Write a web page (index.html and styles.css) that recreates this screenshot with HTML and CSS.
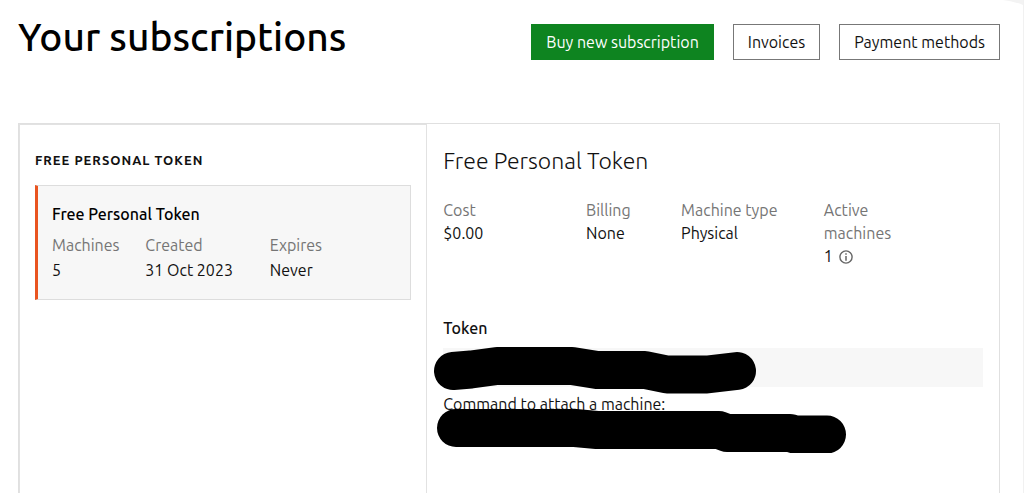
FILE: index.html
```html
<!DOCTYPE html>
<html lang="en">
<head>
<meta charset="utf-8">
<meta name="viewport" content="width=device-width, initial-scale=1">
<title>Your subscriptions</title>
<link rel="stylesheet" href="styles.css">
</head>
<body>
<svg class="corner" viewBox="0 0 20 5" aria-hidden="true"><path d="M0 0H20V5Q10 1 0 0Z" fill="#f3f3f3"/></svg>
<main class="page">
  <header class="header">
    <h1 class="title">Your subscriptions</h1>
    <div class="actions">
      <button class="button button-positive" type="button">Buy new subscription</button>
      <button class="button" type="button">Invoices</button>
      <button class="button" type="button">Payment methods</button>
    </div>
  </header>
  <div class="panel">
    <section class="list">
      <h2 class="list-title">Free Personal Token</h2>
      <article class="card">
        <h3 class="card-title">Free Personal Token</h3>
        <dl class="card-facts">
          <div class="three"><dt>Machines</dt><dd>5</dd></div>
          <div class="four"><dt>Created</dt><dd>31 Oct 2023</dd></div>
          <div class="four"><dt>Expires</dt><dd>Never</dd></div>
        </dl>
      </article>
    </section>
    <section class="details">
      <h2 class="details-title">Free Personal Token</h2>
      <dl class="facts">
        <div class="three"><dt>Cost</dt><dd>$0.00</dd></div>
        <div class="two"><dt>Billing</dt><dd>None</dd></div>
        <div class="three"><dt>Machine type</dt><dd>Physical</dd></div>
        <div class="two"><dt>Active machines</dt><dd class="active">1
          <svg class="info" viewBox="0 0 14 14" aria-hidden="true"><circle cx="7" cy="7" r="6.1" fill="none" stroke="#666" stroke-width="1.4"/><path d="M7 3.2V4.8M7 6V10.8" stroke="#666" stroke-width="1.5"/></svg></dd></div>
      </dl>
      <div class="token">
        <h3 class="token-title">Token</h3>
        <div class="token-value"></div>
        <p class="command">Command to attach a machine:</p>
        <svg class="marker" viewBox="0 0 420 110" aria-hidden="true">
          <g fill="none" stroke="#000" stroke-width="38" stroke-linecap="round" stroke-linejoin="round">
            <path d="M22 28L40 26.5L66 23H141L166 27H214L236 31.5H276L306 28"/>
            <path d="M25 85H144L166 87H288L296 90H359L364 91.5H396"/>
          </g>
        </svg>
      </div>
    </section>
  </div>
</main>
</body>
</html>
```
FILE: styles.css
```css
* { box-sizing: border-box; }
html { height: 100%; }
body {
  min-height: 100%;
  margin: 0;
  display: flex;
  position: relative;
  border-right: 1px solid #f1f1f1;
  background: #fff;
  color: #111;
  font: 16px/23px Ubuntu, "Noto Sans", sans-serif;
}
h1, h2, h3, p, dl, dd { margin: 0; }
.corner { position: absolute; top: 0; right: 0; width: 20px; height: 5px; }
.page {
  flex: 1;
  display: flex;
  flex-direction: column;
  padding: 14px 23px 0 18px;
}
.header {
  display: flex;
  justify-content: space-between;
  align-items: center;
  margin-bottom: 53px;
}
.title { font-size: 39px; line-height: 46px; font-weight: 500; color: #000; padding-bottom: 10px; }
.actions { display: flex; gap: 19px; }
.button {
  height: 36px;
  padding: 0 14px;
  border: 1px solid #777;
  background: #fff;
  color: #111;
  font: inherit;
}
.button-positive { border-color: #0e8420; background: #0e8420; color: #fff; }
.panel {
  flex: 1;
  display: grid;
  grid-template-columns: 5fr 7fr;
  border: 1px solid #e0e0e0;
  border-bottom: 0;
}
.list {
  padding: 24px 15px 0;
  border: 1px solid #e2e2e2;
  border-width: 1px 1px 0;
}
.list-title {
  font-size: 13px;
  line-height: 22px;
  font-weight: 600;
  letter-spacing: 1px;
  text-transform: uppercase;
  margin-bottom: 14px;
}
.card {
  padding: 16px 16px 16px 14px;
  border: 1px solid #ddd;
  border-left: 3px solid #e95420;
  background: #f7f7f7;
}
.card-title { font-size: 16px; line-height: 24px; font-weight: 500; color: #000; margin-bottom: 7px; }
.card-facts, .facts {
  display: grid;
  grid-template-columns: repeat(12, minmax(0, 1fr));
  column-gap: 31px;
}
.card-facts { line-height: 25px; white-space: nowrap; }
.two { grid-column: span 2; }
.three { grid-column: span 3; }
.four { grid-column: span 4; }
dt { color: #757575; }
.details { padding: 21px 16px 0; }
.details-title { font-size: 23px; line-height: 32px; font-weight: 300; margin-bottom: 22px; }
.facts { margin-bottom: 48px; }
.active { display: flex; align-items: center; gap: 6px; }
.info { width: 14px; height: 14px; }
.token { position: relative; }
.token-title { font-size: 16px; line-height: 24px; font-weight: 500; margin-bottom: 8px; }
.token-value { height: 39px; background: #f7f7f7; margin-bottom: 6px; }
.marker { position: absolute; top: 27px; left: -12px; width: 420px; height: 110px; }
```
